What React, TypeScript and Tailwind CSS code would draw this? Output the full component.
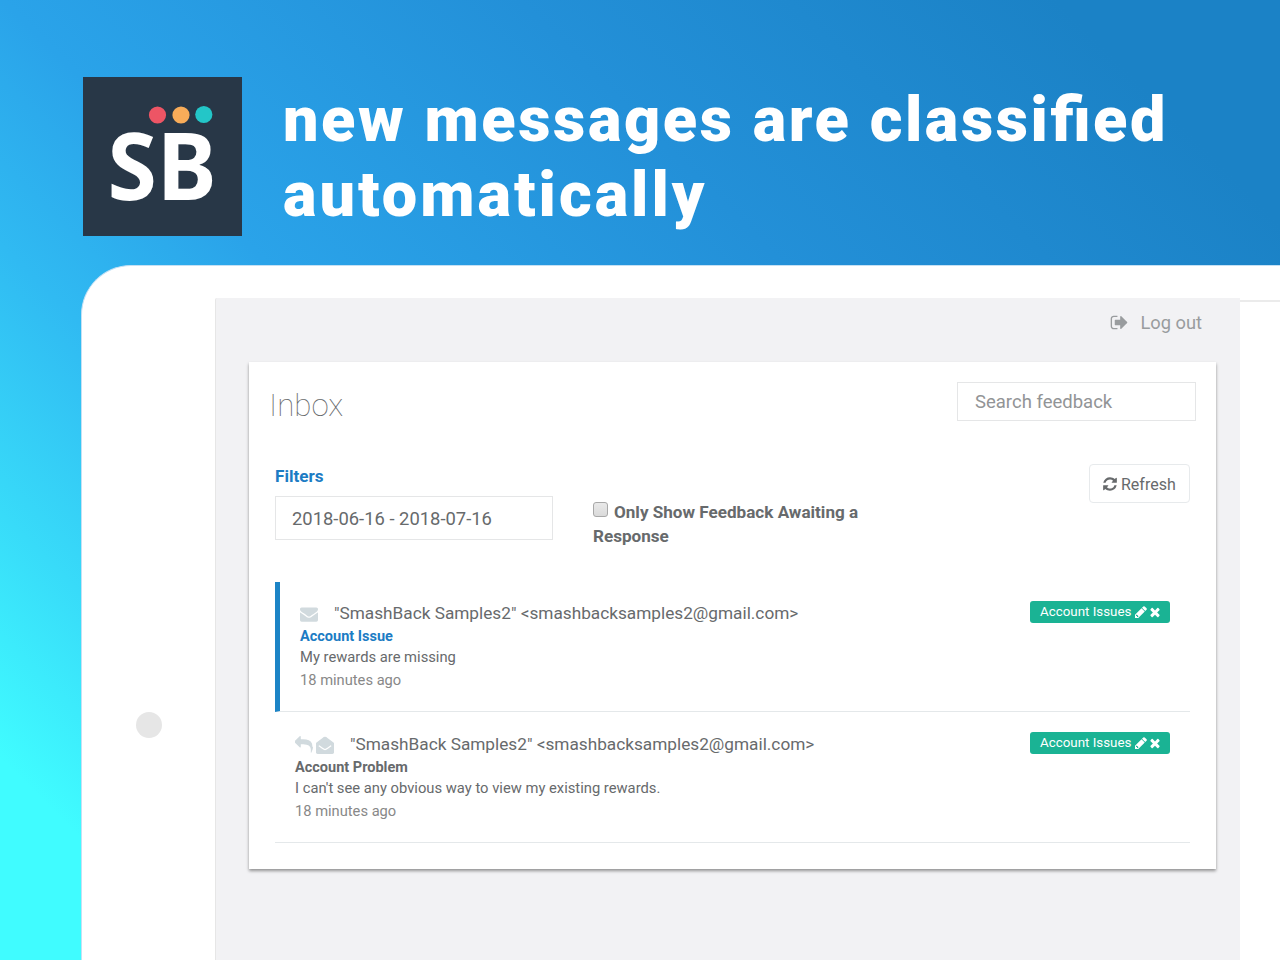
import React from 'react';

type IconProps = { path: string; className?: string };

// Font Awesome 4 outlines, drawn on a 1792 grid
const paths = {
  signOut:
    'M704 1440q0 4 1 20t.5 26.5-3 23.5-10 19.5-20.5 6.5h-320q-119 0-203.5-84.5t-84.5-203.5v-704q0-119 84.5-203.5t203.5-84.5h320q13 0 22.5 9.5t9.5 22.5q0 4 1 20t.5 26.5-3 23.5-10 19.5-20.5 6.5h-320q-66 0-113 47t-47 113v704q0 66 47 113t113 47h312l11.5 1 11.5 3 8 5.5 7 9 2 13.5zm928-544q0 26-19 45l-544 544q-19 19-45 19t-45-19-19-45v-288h-448q-26 0-45-19t-19-45v-384q0-26 19-45t45-19h448v-288q0-26 19-45t45-19 45 19l544 544q19 19 19 45z',
  refresh:
    'M1639 1056q0 5-1 7-64 268-268 434.5t-478 166.5q-146 0-282.5-55t-243.5-157l-129 129q-19 19-45 19t-45-19-19-45v-448q0-26 19-45t45-19h448q26 0 45 19t19 45-19 45l-137 137q71 66 161 102t187 36q134 0 250-65t186-179q11-17 53-117 8-23 30-23h192q13 0 22.5 9.5t9.5 22.5zm25-800v448q0 26-19 45t-45 19h-448q-26 0-45-19t-19-45 19-45l138-138q-148-137-349-137-134 0-250 65t-186 179q-11 17-53 117-8 23-30 23h-199q-13 0-22.5-9.5t-9.5-22.5v-7q65-268 270-434.5t480-166.5q146 0 284 55.5t245 156.5l130-129q19-19 45-19t45 19 19 45z',
  envelope:
    'M1792 710v794q0 66-47 113t-113 47h-1472q-66 0-113-47t-47-113v-794q44 49 101 87 362 246 497 345 57 42 92.5 65.5t94.5 48 110 24.5h2q51 0 110-24.5t94.5-48 92.5-65.5q170-123 498-345 57-39 100-87zm0-294q0 79-49 151t-122 123q-376 261-468 325-10 7-42.5 31t-54 38.5-52 32.5-57.5 27-50 9h-2q-23 0-50-9t-57.5-27-52-32.5-54-38.5-42.5-31q-91-64-262-182.5t-205-142.5q-62-42-117-115.5t-55-136.5q0-78 41.5-130t118.5-52h1472q65 0 112.5 47t47.5 113z',
  envelopeOpen:
    'M1792 710v922q0 66-47 113t-113 47H160q-66 0-113-47T0 1632V710q0-30 24-49Q180 540 620 220 780 80 896 80t276 140q440 320 596 441 24 19 24 49zM330 930q-20-16-36 4l-40 56q-16 22 6 38l340 246q190 146 296 146t296-146l340-246q22-16 6-38l-40-56q-16-20-36-4l-340 246q-150 114-226 114t-226-114z',
  reply:
    'M1792 1120q0 166-127 451-3 7-10.5 24t-13.5 30-13 22q-12 17-28 17-15 0-23.5-10t-8.5-25q0-9 2.5-26.5t2.5-23.5q5-68 5-123 0-112-19.5-200.5t-54-153.5-89-112-115-79.5-145-50-165.5-25.5-190-7h-224v256q0 26-19 45t-45 19-45-19l-512-512q-19-19-19-45t19-45l512-512q19-19 45-19t45 19 19 45v256h224q713 0 875 403 53 134 53 333z',
  pencil:
    'M491 1536l91-91-235-235-91 91v107h128v128h107zm469-1120l416 416-832 832h-416v-416zm683 96q0 53-37 90l-166 166-416-416 166-165q36-38 90-38 53 0 91 38l235 234q37 39 37 91z',
  times:
    'M1490 1322q0 40-28 68l-136 136q-28 28-68 28t-68-28l-294-294-294 294q-28 28-68 28t-68-28l-136-136q-28-28-28-68t28-68l294-294-294-294q-28-28-28-68t28-68l136-136q28-28 68-28t68 28l294 294 294-294q28-28 68-28t68 28l136 136q28 28 28 68t-28 68l-294 294 294 294q28 28 28 68z',
};

const Icon: React.FC<IconProps> = ({ path, className }) => (
  <svg viewBox="0 0 1792 1792" fill="currentColor" className={className} aria-hidden="true">
    <path d={path} />
  </svg>
);

const Logo: React.FC = () => (
  <svg viewBox="0 0 159 159" className="size-[159px] shrink-0 bg-[#283747]">
    <circle cx="74.5" cy="38" r="8.6" fill="#ed5565" />
    <circle cx="98" cy="38" r="8.6" fill="#f8ac59" />
    <circle cx="120.8" cy="37.5" r="8.6" fill="#23c6c8" />
    <text
      x="24.5"
      y="122.5"
      textLength="109"
      lengthAdjust="spacingAndGlyphs"
      className="fill-white font-['Noto_Sans',sans-serif] text-[93px] font-bold"
    >
      SB
    </text>
  </svg>
);

const Tag: React.FC = () => (
  <span className="-mt-[1px] flex h-[22px] w-[140px] shrink-0 items-center rounded-[3px] bg-[#1ab394] pt-[1px] pl-[10px] text-[13.35px] text-white">
    <span className="w-[92px] whitespace-nowrap">Account Issues</span>
    <Icon path={paths.pencil} className="-mt-[1px] ml-[1.5px] size-[14px]" />
    <Icon path={paths.times} className="-mt-[1px] size-[14px]" />
  </span>
);

type Message = {
  subject: string;
  body: string;
  unread: boolean;
};

const messages: Message[] = [
  { subject: 'Account Issue', body: 'My rewards are missing', unread: true },
  {
    subject: 'Account Problem',
    body: "I can't see any obvious way to view my existing rewards.",
    unread: false,
  },
];

const MessageRow: React.FC<{ message: Message }> = ({ message }) => (
  <div
    className={
      message.unread
        ? 'flex h-[130px] justify-between border-b border-l-[5px] border-b-[#e4e8ea] border-l-[#1c84c6] pt-[20px] pr-[20px] pl-[20px]'
        : 'flex h-[131px] justify-between border-b border-[#e4e8ea] pt-[21px] pr-[20px] pl-[20px]'
    }
  >
    <div>
      <div className="flex h-[24px] items-center text-[17.23px]">
        {message.unread ? (
          <Icon path={paths.envelope} className="mr-[16px] size-[18px] text-[#d1dade]" />
        ) : (
          <>
            <Icon path={paths.reply} className="mr-[3px] size-[18px] text-[#d1dade]" />
            <Icon path={paths.envelopeOpen} className="-mt-[1px] mr-[16px] size-[18px] text-[#d1dade]" />
          </>
        )}
        <span>"SmashBack Samples2" &lt;smashbacksamples2@gmail.com&gt;</span>
      </div>
      <div className={message.unread ? 'h-[21px] text-[14.5px] leading-[21px] font-bold text-[#1c7cc4]' : 'h-[21px] text-[14.5px] leading-[21px] font-bold'}>
        {message.subject}
      </div>
      <div className="h-[22px] text-[14.75px] leading-[21px]">{message.body}</div>
      <div className="h-[23px] text-[14.7px] leading-[23px] text-[#888888]">18 minutes ago</div>
    </div>
    <Tag />
  </div>
);

const Inbox: React.FC = () => (
  <div className="mr-[34px] ml-[33px] mt-[38px] h-[507px] w-[967px] bg-white shadow-[0_2px_3px_rgba(0,0,0,0.4)]">
    <div className="flex items-start justify-between pt-[20px] pr-[20px] pl-[20px]">
      <h1 className="mt-[4px] text-[31.3px] leading-[40px] font-thin text-[#676a6c]">Inbox</h1>
      <div className="flex h-[39px] w-[239px] items-center border border-[#e5e6e7] pt-[2px] pl-[17px] text-[18.5px] text-[#929496]">
        Search feedback
      </div>
    </div>
    <div className="mx-[26px] mt-[35px] flex h-[121px] pt-[4px]">
      <div className="w-[278px]">
        <div className="h-[31px] text-[17.1px] leading-[22px] font-bold text-[#1c7cc4]">Filters</div>
        <div className="flex h-[44px] items-center border border-[#e5e6e7] pl-[16px] pt-[1px] text-[18.4px]">
          2018-06-16 - 2018-07-16
        </div>
      </div>
      <div className="mt-[35px] ml-[40px] w-[290px] text-[17.1px] leading-[24px] font-bold">
        <span className="mr-[6px] inline-block size-[15px] rounded-[3px] border border-[#a8a8a8] bg-linear-to-b from-[#e9e9e9] to-[#dadada] align-[1px]" />
        Only Show Feedback Awaiting a Response
      </div>
      <button className="-mt-[1px] ml-auto flex h-[39px] w-[101px] items-center rounded-[4px] border border-[#e7eaec] pt-[2px] pl-[12px] text-[16px]">
        <Icon path={paths.refresh} className="mr-[3px] -mt-[2px] size-[16px]" />
        Refresh
      </button>
    </div>
    <div className="mx-[26px]">
      {messages.map((message) => (
        <MessageRow key={message.subject} message={message} />
      ))}
    </div>
  </div>
);

const App: React.FC = () => {
  return (
    <div className="flex h-[960px] w-[1280px] flex-col overflow-hidden bg-[linear-gradient(45deg,#40fcff_9%,#38dbf9_20%,#30baf2_32%,#2aa3e9_43%,#2390d8_66%,#1b82c6_90%)] font-[Roboto,sans-serif] text-[#676a6c]">
      <header className="flex h-[265px] shrink-0 pt-[77px] pl-[83px]">
        <Logo />
        <h2 className="mt-[5px] ml-[41px] text-[63px] leading-[75px] font-black tracking-[2.55px] text-white [font-feature-settings:'liga'_1]">
          new messages are classified
          <br />
          <span className="tracking-[3px]">automatically</span>
        </h2>
      </header>
      {/* Tablet frame, cut off by the right and bottom edges */}
      <main className="ml-[81px] flex grow rounded-tl-[50px] border-t border-l border-[#c4e0f4] bg-white">
        <div className="flex w-[133px] shrink-0 justify-center pt-[446px]">
          <div className="size-[26px] rounded-full bg-[#e6e6e6]" />
        </div>
        <section className="mt-[32px] w-[1025px] shrink-0 rounded-tl-[2px] border-l border-[#e6e6e6] bg-[#f2f2f4]">
          <div className="flex h-[26px] items-center justify-end pt-[23px] pr-[38px] text-[18.3px] text-[#999c9e]">
            <Icon path={paths.signOut} className="mr-[11px] size-[19px]" />
            Log out
          </div>
          <Inbox />
        </section>
        <div className="mt-[34px] grow border-t-2 border-[#ebebeb]" />
      </main>
    </div>
  );
};

export default App;
